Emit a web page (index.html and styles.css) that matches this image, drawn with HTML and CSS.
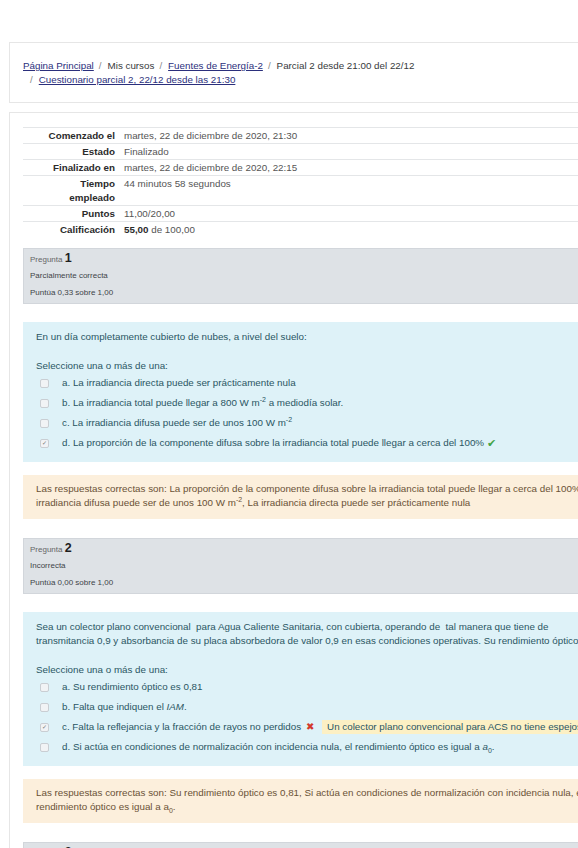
FILE: index.html
```html
<!DOCTYPE html>
<html lang="es">
<head>
<meta charset="utf-8">
<title>Cuestionario parcial 2</title>
<link rel="stylesheet" href="styles.css">
</head>
<body>
<div class="page">
  <header class="crumbcard">
    <ol class="breadcrumb">
      <li><a href="#">Página Principal</a></li>
      <li>Mis cursos</li>
      <li><a href="#">Fuentes de Energía-2</a></li>
      <li>Parcial 2 desde 21:00 del 22/12</li>
      <li><a href="#">Cuestionario parcial 2, 22/12 desde las 21:30</a></li>
    </ol>
  </header>

  <main class="maincard">
    <table class="summary">
      <tr><th>Comenzado el</th><td>martes, 22 de diciembre de 2020, 21:30</td></tr>
      <tr><th>Estado</th><td>Finalizado</td></tr>
      <tr><th>Finalizado en</th><td>martes, 22 de diciembre de 2020, 22:15</td></tr>
      <tr><th>Tiempo empleado</th><td>44 minutos 58 segundos</td></tr>
      <tr><th>Puntos</th><td>11,00/20,00</td></tr>
      <tr><th>Calificación</th><td><b>55,00</b> de 100,00</td></tr>
    </table>

    <section class="que">
      <div class="info">
        <h3 class="qno">Pregunta <span class="num">1</span></h3>
        <div class="state">Parcialmente correcta</div>
        <div class="grade">Puntúa 0,33 sobre 1,00</div>
      </div>
      <div class="formulation">
        <div class="qtext">En un día completamente cubierto de nubes, a nivel del suelo:</div>
        <div class="prompt">Seleccione una o más de una:</div>
        <div class="answer">
          <div class="opt"><span class="cb"></span><span>a. La irradiancia directa puede ser prácticamente nula</span></div>
          <div class="opt"><span class="cb"></span><span>b. La irradiancia total puede llegar a 800 W m<sup>-2</sup> a mediodía solar.</span></div>
          <div class="opt"><span class="cb"></span><span>c. La irradiancia difusa puede ser de unos 100 W m<sup>-2</sup></span></div>
          <div class="opt"><span class="cb checked">&#10003;</span><span>d. La proporción de la componente difusa sobre la irradiancia total puede llegar a cerca del 100%</span><span class="ok">&#10004;</span></div>
        </div>
      </div>
      <div class="outcome">Las respuestas correctas son: La proporción de la componente difusa sobre la irradiancia total puede llegar a cerca del 100%, La irradiancia difusa puede ser de unos 100 W m<sup>-2</sup>, La irradiancia directa puede ser prácticamente nula</div>
    </section>

    <section class="que">
      <div class="info">
        <h3 class="qno">Pregunta <span class="num">2</span></h3>
        <div class="state">Incorrecta</div>
        <div class="grade">Puntúa 0,00 sobre 1,00</div>
      </div>
      <div class="formulation">
        <div class="qtext">Sea un colector plano convencional&nbsp; para Agua Caliente Sanitaria, con cubierta, operando de&nbsp; tal manera que tiene de<br>transmitancia 0,9 y absorbancia de su placa absorbedora de valor 0,9 en esas condiciones operativas. Su rendimiento óptico</div>
        <div class="prompt">Seleccione una o más de una:</div>
        <div class="answer">
          <div class="opt"><span class="cb"></span><span>a. Su rendimiento óptico es 0,81</span></div>
          <div class="opt"><span class="cb"></span><span>b. Falta que indiquen el <i>IAM</i>.</span></div>
          <div class="opt"><span class="cb checked">&#10003;</span><span>c. Falta la reflejancia y la fracción de rayos no perdidos</span><span class="bad">&#10006;</span><span class="specific">Un colector plano convencional para ACS no tiene espejos</span></div>
          <div class="opt"><span class="cb"></span><span>d. Si actúa en condiciones de normalización con incidencia nula, el rendimiento óptico es igual a <i>a</i><sub>0</sub>.</span></div>
        </div>
      </div>
      <div class="outcome">Las respuestas correctas son: Su rendimiento óptico es 0,81, Si actúa en condiciones de normalización con incidencia nula, el rendimiento óptico es igual a a<sub>0</sub>.</div>
    </section>

    <section class="que">
      <div class="info">
        <h3 class="qno">Pregunta <span class="num">3</span></h3>
        <div class="state">Correcta</div>
        <div class="grade">Puntúa 1,00 sobre 1,00</div>
      </div>
    </section>
  </main>
</div>
</body>
</html>
```

FILE: styles.css
```css
html, body {
  margin: 0;
  padding: 0;
  overflow: hidden;
  background: #ffffff;
}
body {
  font-family: "Liberation Sans", Arial, sans-serif;
  font-size: 9.8px;
  line-height: 14px;
  color: #373a3c;
}
.page {
  padding: 42px 0 0 9px;
  width: 640px;
}
.crumbcard {
  border: 1px solid #e6e6e6;
  padding: 16px 13px 15px;
}
.breadcrumb {
  list-style: none;
  margin: 0;
  padding: 0;
  display: flex;
  flex-wrap: wrap;
  width: 430px;
}
.breadcrumb li + li::before {
  content: "/";
  color: #888;
  padding: 0 6px 0 5px;
}
.breadcrumb li:last-child::before {
  padding-left: 7px;
}
.breadcrumb a {
  color: #2b2f7c;
  text-decoration: underline;
}
.maincard {
  margin-top: 9px;
  border: 1px solid #e6e6e6;
  border-bottom: none;
  padding: 14px 0 0 13px;
}
.summary {
  border-collapse: collapse;
  width: 620px;
  margin-bottom: 11px;
}
.summary tr {
  border-top: 1px solid #e4e6e8;
}
.summary th, .summary td {
  padding: 1px 0 0;
  vertical-align: top;
  text-align: left;
}
.summary th {
  width: 68px;
  padding-left: 24px;
  padding-right: 9px;
  text-align: right;
  font-weight: bold;
  color: #2b2b2b;
}
.summary td {
  color: #555;
}
.summary td b {
  color: #2b2b2b;
}
.que {
  width: 615px;
  margin-bottom: 19px;
}
.info {
  background: #dee2e6;
  border: 1px solid #d2d6db;
  padding: 4px 6px 3px;
  font-size: 8px;
  line-height: 14px;
  color: #404448;
}
.qno {
  margin: 0;
  height: 14px;
  font-weight: normal;
  font-size: 8px;
  line-height: 14px;
  color: #666;
}
.qno .num {
  font-size: 12.5px;
  font-weight: bold;
  color: #1e1e1e;
  line-height: 10px;
}
.state {
  margin-top: 2px;
  height: 14px;
}
.grade {
  margin-top: 3px;
  height: 14px;
}
.formulation {
  margin-top: 18px;
  background: #def2f8;
  color: #2a5663;
  padding: 8px 13px 9px;
}
.prompt {
  margin-top: 15px;
}
.opt {
  display: flex;
  align-items: center;
  height: 20px;
  white-space: nowrap;
}
.cb {
  box-sizing: border-box;
  width: 9px;
  height: 9px;
  border: 1px solid #c9ced3;
  border-radius: 2px;
  background: #f1f3f5;
  margin: 0 13px 0 4px;
  font-size: 6px;
  line-height: 7px;
  text-align: center;
  color: #777;
  flex: none;
}
.ok {
  color: #43a447;
  margin-left: 3px;
  font-size: 11px;
}
.bad {
  color: #d33a2c;
  margin: 0 8px 0 5px;
  font-size: 9.5px;
}
.specific {
  background: #fcf0c4;
  padding: 0 5px;
}
sup, sub {
  font-size: 7px;
  line-height: 0;
}
.outcome {
  margin-top: 13px;
  background: #fcefdc;
  color: #6a5236;
  padding: 7px 13px 9px;
}
```
